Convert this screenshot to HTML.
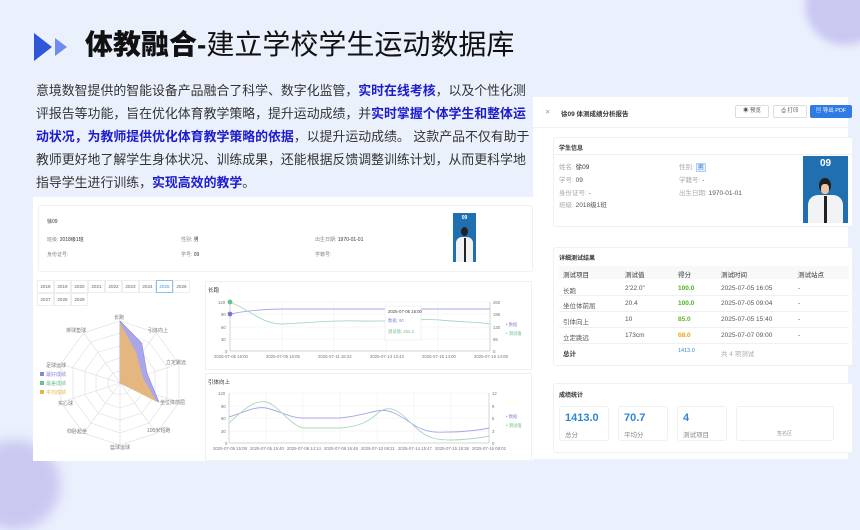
<!DOCTYPE html>
<html><head><meta charset="utf-8"><style>
*{margin:0;padding:0;box-sizing:border-box}
body{width:860px;height:484px;overflow:hidden;background:#ebf0fd;font-family:"Liberation Sans","Noto Sans CJK SC",sans-serif;position:relative;color:#222}
.abs{position:absolute}
.blob1{left:805px;top:-35px;width:80px;height:80px;border-radius:50%;background:#c9c8f1;filter:blur(4px)}
.blob2{left:-30px;top:440px;width:90px;height:90px;border-radius:50%;background:#c9c8f1;filter:blur(6px)}
.title{left:85px;top:26px;font-size:28px;line-height:38px;white-space:nowrap;color:#111}
.title b{font-weight:900}
.para{left:36px;top:79px;width:520px;font-size:12.9px;line-height:23px;color:#333;white-space:nowrap}
.para b{color:#1c1ccc}
.lp{left:33px;top:197px;width:500px;height:264px;background:#fff}
.card{position:absolute;background:#fff;border:1px solid #eef0f4;border-radius:3px}
.s{font-size:5px;color:#888;position:absolute;white-space:nowrap}
.rp{left:533px;top:97px;width:315px;height:362px;background:#fff}
.t7{font-size:6.5px;position:absolute;white-space:nowrap;color:#555}
.btn{position:absolute;top:8px;height:13px;border:1px solid #ddd;border-radius:2px;font-size:5.5px;line-height:11px;text-align:center;color:#555}
</style></head><body>
<div class="abs blob1"></div><div class="abs blob2"></div>
<svg class="abs" style="left:34px;top:33px" width="40" height="30"><polygon points="0,0 18,14 0,28" fill="#2e56d8"/><polygon points="21,5 33,14 21,23" fill="#6f8cf0"/></svg>
<div class="abs title"><b>体教融合-</b>建立学校学生运动数据库</div>
<div class="abs para">意境数智提供的智能设备产品融合了科学、数字化监管，<b>实时在线考核</b>，以及个性化测<br>评报告等功能，旨在优化体育教学策略，提升运动成绩，并<b>实时掌握个体学生和整体运</b><br><b>动状况，为教师提供优化体育教学策略的依据</b>，以提升运动成绩。 这款产品不仅有助于<br>教师更好地了解学生身体状况、训练成果，还能根据反馈调整训练计划，从而更科学地<br>指导学生进行训练，<b>实现高效的教学</b>。</div>

<div class="abs lp">
 <div class="card" style="left:5px;top:8px;width:495px;height:67px">
  <div class="s" style="left:8px;top:12px;color:#333">徐09</div>
  <div class="s" style="left:8px;top:30px">班级: <span style="color:#333">2018级1班</span></div>
  <div class="s" style="left:142px;top:30px">性别: <span style="color:#333">男</span></div>
  <div class="s" style="left:276px;top:30px">出生日期: <span style="color:#333">1970-01-01</span></div>
  <div class="s" style="left:8px;top:45px">身份证号:</div>
  <div class="s" style="left:142px;top:45px">学号: <span style="color:#333">09</span></div>
  <div class="s" style="left:276px;top:45px">学籍号:</div>
  <div style="position:absolute;left:414px;top:7px;width:23px;height:49px;background:#1f6fb1">
   <div style="color:#fff;font-size:5px;font-weight:bold;text-align:center;margin-top:2px">09</div>
   <div style="position:absolute;left:8px;top:14px;width:7px;height:9px;border-radius:50%;background:#222"></div>
   <div style="position:absolute;left:3px;top:24px;width:17px;height:25px;border-radius:6px 6px 0 0;background:#f2f2f4"></div>
   <div style="position:absolute;left:11px;top:25px;width:1.5px;height:24px;background:#222"></div>
  </div>
 </div>
 <div style="position:absolute;left:4px;top:83px;width:153px;height:27px;font-size:4.6px;color:#666">
  <div style="display:flex">
   <div style="width:17px;height:13px;border:1px solid #eee;text-align:center;line-height:11px">2018</div><div style="width:17px;height:13px;border:1px solid #eee;text-align:center;line-height:11px">2019</div><div style="width:17px;height:13px;border:1px solid #eee;text-align:center;line-height:11px">2020</div><div style="width:17px;height:13px;border:1px solid #eee;text-align:center;line-height:11px">2021</div><div style="width:17px;height:13px;border:1px solid #eee;text-align:center;line-height:11px">2022</div><div style="width:17px;height:13px;border:1px solid #eee;text-align:center;line-height:11px">2023</div><div style="width:17px;height:13px;border:1px solid #eee;text-align:center;line-height:11px">2024</div><div style="width:17px;height:13px;border:1px solid #8cc0e8;color:#4a9bd6;text-align:center;line-height:11px">2025</div><div style="width:17px;height:13px;border:1px solid #eee;text-align:center;line-height:11px">2026</div>
  </div>
  <div style="display:flex">
   <div style="width:17px;height:13px;border:1px solid #eee;text-align:center;line-height:11px">2027</div><div style="width:17px;height:13px;border:1px solid #eee;text-align:center;line-height:11px">2028</div><div style="width:17px;height:13px;border:1px solid #eee;text-align:center;line-height:11px">2029</div>
  </div>
 </div>
</div>
<svg class="abs" style="left:33px;top:310px" width="175" height="150" viewBox="33 310 175 150" font-size="5" fill="#777" font-family="Liberation Sans, Noto Sans CJK SC, sans-serif">
 <g fill="none" stroke="#ddd" stroke-width="0.6">
  <polygon points="120,321 156.4,332.8 179,363.8 179,402.2 156.4,433.2 120,445 83.6,433.2 61,402.2 61,363.8 83.6,332.8"/>
  <polygon points="120,333 149,342 167,367 167,398 149,423 120,433 91,423 73,398 73,367 91,342"/>
  <polygon points="120,346 142,352 155,371 155,395 142,413 120,420 98,413 85,395 85,371 98,352"/>
  <polygon points="120,358 135,363 144,375 144,391 135,403 120,408 105,403 96,391 96,375 105,363"/>
  <polygon points="120,371 127,373 132,379 132,387 127,393 120,395 113,393 108,387 108,379 113,373"/>
  <path d="M120,383L120,321M120,383L156.4,332.8M120,383L179,363.8M120,383L179,402.2M120,383L156.4,433.2M120,383L120,445M120,383L83.6,433.2M120,383L61,402.2M120,383L61,363.8M120,383L83.6,332.8"/>
 </g>
 <polygon points="120,383 120,321 141.7,343 147,373 159,402" fill="#a9a6ea" stroke="#8f8be0" stroke-width="0.6"/>
 <polygon points="120,383 120,323 136,352 143,378 157,402" fill="#e3b77f"/>
 <text x="114" y="319">长跑</text><text x="148" y="332">引体向上</text><text x="166" y="364">立定跳远</text><text x="160" y="404">坐位体前屈</text><text x="147" y="432">100米短跑</text><text x="110" y="449">篮球运球</text><text x="67" y="433">仰卧起坐</text><text x="58" y="405">实心球</text><text x="46" y="367">足球运球</text><text x="66" y="332">排球垫球</text>
 <rect x="40" y="372" width="4" height="4" fill="#8a86d8"/><text x="46" y="376" fill="#8a86d8">最好成绩</text>
 <rect x="40" y="381" width="4" height="4" fill="#6cc08e"/><text x="46" y="385" fill="#6cc08e">最差成绩</text>
 <rect x="40" y="390" width="4" height="4" fill="#e8b24c"/><text x="46" y="394" fill="#e8b24c">平均成绩</text>
</svg>
<svg class="abs" style="left:205px;top:280px" width="328" height="181" viewBox="205 280 328 181" font-size="4.3" fill="#777" font-family="Liberation Sans, Noto Sans CJK SC, sans-serif">
 <rect x="205.5" y="281.5" width="326" height="88" fill="#fff" stroke="#f0f0f3"/>
 <rect x="205.5" y="373.5" width="326" height="87" fill="#fff" stroke="#f0f0f3"/>
 <text x="208" y="292" fill="#333" font-size="5.5">长跑</text>
 <g stroke="#eee" stroke-width="0.5"><path d="M230,302H490M230,314H490M230,327H490M230,339H490M282,302V351M334,302V351M386,302V351M438,302V351"/></g>
 <path d="M230,351H490M230,302V351M490,302V351" stroke="#aaa" stroke-width="0.5"/>
 <text x="218" y="304">120</text><text x="221" y="316">90</text><text x="221" y="329">60</text><text x="221" y="341">30</text><text x="225" y="353">0</text>
 <text x="493" y="304">260</text><text x="493" y="316">195</text><text x="493" y="329">130</text><text x="493" y="341">65</text><text x="493" y="353">0</text>
 <text x="214" y="358">2025-07-05 16:00</text><text x="266" y="358">2025-07-05 16:05</text><text x="318" y="358">2025-07-11 16:22</text><text x="370" y="358">2025-07-13 13:43</text><text x="422" y="358">2025-07-15 14:00</text><text x="474" y="358">2025-07-15 14:08</text>
 <path d="M230,314C250,310 270,309 282,309H490" fill="none" stroke="#a8a6e6" stroke-width="0.9"/>
 <path d="M230,302C250,310 262,324 282,324C310,323 330,320 360,321S420,318 440,320S480,322 490,324" fill="none" stroke="#a6d9bd" stroke-width="0.9"/>
 <circle cx="230" cy="314" r="2.4" fill="#7b74d8"/><circle cx="230" cy="302" r="2.4" fill="#6cc08e"/>
 <rect x="385" y="306" width="36" height="34" fill="#fff" stroke="#e6e6e6" stroke-width="0.5"/>
 <text x="388" y="313" fill="#444">2025-07-05 16:00</text><text x="388" y="322" fill="#8a86d8">数据: 90</text><text x="388" y="333" fill="#6cc08e">测试值: 253.2</text>
 <text x="506" y="326" fill="#8a86d8">• 数据</text><text x="506" y="335" fill="#6cc08e">• 测试值</text>
 <text x="208" y="384" fill="#333" font-size="5.5">引体向上</text>
 <g stroke="#eee" stroke-width="0.5"><path d="M229,393H489M229,406H489M229,418H489M229,431H489M266,393V443M303,393V443M340,393V443M377,393V443M414,393V443M451,393V443"/></g>
 <path d="M229,443H489M229,393V443M489,393V443" stroke="#aaa" stroke-width="0.5"/>
 <text x="218" y="395">120</text><text x="221" y="408">90</text><text x="221" y="420">60</text><text x="221" y="433">30</text><text x="225" y="445">0</text>
 <text x="492" y="395">12</text><text x="492" y="408">9</text><text x="492" y="420">6</text><text x="492" y="433">3</text><text x="492" y="445">0</text>
 <text x="213" y="450">2025-07-05 15:08</text><text x="250" y="450">2025-07-05 15:40</text><text x="287" y="450">2025-07-08 14:14</text><text x="324" y="450">2025-07-09 16:48</text><text x="361" y="450">2025-07-10 09:21</text><text x="398" y="450">2025-07-14 15:47</text><text x="435" y="450">2025-07-15 15:38</text><text x="472" y="450">2025-07-16 09:02</text>
 <path d="M229,417C245,412 255,406 266,408S290,418 303,418H340C360,416 370,412 377,411C390,408 400,416 414,425S440,432 451,432S480,430 489,428" fill="none" stroke="#a8a6e6" stroke-width="0.9"/>
 <path d="M229,423C245,408 255,400 266,402S290,425 303,428H340C360,427 370,420 377,414C390,402 400,412 414,426S440,440 451,440S480,438 489,436" fill="none" stroke="#a6d9bd" stroke-width="0.9"/>
 <text x="506" y="418" fill="#8a86d8">• 数据</text><text x="506" y="427" fill="#6cc08e">• 测试值</text>
</svg>

<div class="abs rp">
 <div class="t7" style="left:12px;top:11px;color:#999">✕</div>
 <div class="t7" style="left:28px;top:11px;color:#333;font-weight:bold">徐09 体测成绩分析报告</div>
 <div class="btn" style="left:202px;width:34px">◉ 预览</div>
 <div class="btn" style="left:240px;width:34px">⎙ 打印</div>
 <div class="btn" style="left:277px;width:42px;background:#2f7ae5;border-color:#2f7ae5;color:#fff">▤ 导出 PDF</div>
 <div style="position:absolute;left:0;top:30px;width:315px;border-top:1px solid #f0f0f0"></div>
 <div class="card" style="left:20px;top:40px;width:300px;height:90px">
  <div class="t7" style="left:5px;top:5px;color:#333;font-weight:bold;font-size:6px">学生信息</div>
  <div style="position:absolute;left:0;top:16px;width:100%;border-top:1px solid #f0f0f0"></div>
  <div class="t7" style="left:5px;top:23px;color:#aaa">姓名: <span style="color:#333">徐09</span></div>
  <div class="t7" style="left:125px;top:23px;color:#aaa">性别: <span style="color:#3a7bd5;background:#e4efff;border:1px solid #b6d0f5;padding:0 1px">男</span></div>
  <div class="t7" style="left:5px;top:36px;color:#aaa">学号: <span style="color:#555">09</span></div>
  <div class="t7" style="left:125px;top:36px;color:#aaa">学籍号: <span style="color:#555">-</span></div>
  <div class="t7" style="left:5px;top:49px;color:#aaa">身份证号: <span style="color:#555">-</span></div>
  <div class="t7" style="left:125px;top:49px;color:#aaa">出生日期: <span style="color:#555">1970-01-01</span></div>
  <div class="t7" style="left:5px;top:61px;color:#aaa">班级: <span style="color:#555">2018级1班</span></div>
 </div>
 <div style="position:absolute;left:270px;top:59px;width:45px;height:67px;background:#1f6fb1">
  <div style="color:#fff;font-size:10px;font-weight:bold;text-align:center;margin-top:2px">09</div>
  <div style="position:absolute;left:16px;top:22px;width:12px;height:15px;border-radius:50%;background:#1e1e1e"></div>
  <div style="position:absolute;left:18px;top:28px;width:8px;height:10px;border-radius:40%;background:#e9c4a6"></div>
  <div style="position:absolute;left:5px;top:39px;width:35px;height:28px;border-radius:10px 10px 0 0;background:#f3f3f5"></div>
  <div style="position:absolute;left:21px;top:40px;width:3px;height:27px;background:#222"></div>
 </div>
 <div class="card" style="left:20px;top:150px;width:300px;height:119px">
  <div class="t7" style="left:5px;top:5px;color:#333;font-weight:bold;font-size:6px">详细测试结果</div>
  <div style="position:absolute;left:5px;top:18px;width:290px;height:13px;background:#f7f8fa"></div>
  <div class="t7" style="left:9px;top:21px;color:#333">测试项目</div><div class="t7" style="left:71px;top:21px;color:#333">测试值</div><div class="t7" style="left:124px;top:21px;color:#333">得分</div><div class="t7" style="left:167px;top:21px;color:#333">测试时间</div><div class="t7" style="left:244px;top:21px;color:#333">测试站点</div>
  <div class="t7" style="left:9px;top:37px">长跑</div><div class="t7" style="left:71px;top:37px">2'22.0"</div><div class="t7" style="left:124px;top:37px;color:#4caf1e;font-weight:bold">100.0</div><div class="t7" style="left:167px;top:37px">2025-07-05 16:05</div><div class="t7" style="left:244px;top:37px">-</div>
  <div style="position:absolute;left:5px;top:47px;width:290px;border-top:1px solid #f0f0f0"></div>
  <div class="t7" style="left:9px;top:52px">坐位体前屈</div><div class="t7" style="left:71px;top:52px">20.4</div><div class="t7" style="left:124px;top:52px;color:#4caf1e;font-weight:bold">100.0</div><div class="t7" style="left:167px;top:52px">2025-07-05 09:04</div><div class="t7" style="left:244px;top:52px">-</div>
  <div style="position:absolute;left:5px;top:63px;width:290px;border-top:1px solid #f0f0f0"></div>
  <div class="t7" style="left:9px;top:68px">引体向上</div><div class="t7" style="left:71px;top:68px">10</div><div class="t7" style="left:124px;top:68px;color:#6ab42a;font-weight:bold">85.0</div><div class="t7" style="left:167px;top:68px">2025-07-05 15:40</div><div class="t7" style="left:244px;top:68px">-</div>
  <div style="position:absolute;left:5px;top:79px;width:290px;border-top:1px solid #f0f0f0"></div>
  <div class="t7" style="left:9px;top:84px">立定跳远</div><div class="t7" style="left:71px;top:84px">173cm</div><div class="t7" style="left:124px;top:84px;color:#e6a817;font-weight:bold">68.0</div><div class="t7" style="left:167px;top:84px">2025-07-07 09:00</div><div class="t7" style="left:244px;top:84px">-</div>
  <div style="position:absolute;left:5px;top:95px;width:290px;border-top:1px solid #f0f0f0"></div>
  <div class="t7" style="left:9px;top:100px;color:#333;font-weight:bold">总计</div><div class="t7" style="left:124px;top:100px;color:#3a8ad6;font-size:5.5px">1413.0</div><div class="t7" style="left:167px;top:100px;color:#aaa">共 4 项测试</div>
 </div>
 <div class="card" style="left:20px;top:286px;width:300px;height:70px">
  <div class="t7" style="left:5px;top:6px;color:#333;font-weight:bold;font-size:6px">成绩统计</div>
  <div class="card" style="left:5px;top:22px;width:50px;height:35px"><div style="position:absolute;left:5px;top:5px;font-size:11px;font-weight:bold;color:#2f86d6">1413.0</div><div class="t7" style="left:5px;top:22px;color:#888">总分</div></div>
  <div class="card" style="left:64px;top:22px;width:50px;height:35px"><div style="position:absolute;left:5px;top:5px;font-size:11px;font-weight:bold;color:#2f86d6">70.7</div><div class="t7" style="left:5px;top:22px;color:#888">平均分</div></div>
  <div class="card" style="left:123px;top:22px;width:50px;height:35px"><div style="position:absolute;left:5px;top:5px;font-size:11px;font-weight:bold;color:#2f86d6">4</div><div class="t7" style="left:5px;top:22px;color:#888">测试项目</div></div>
  <div class="card" style="left:182px;top:22px;width:98px;height:35px"><div class="t7" style="left:40px;top:23px;color:#999;font-size:5px">签名区</div></div>
 </div>
</div>
</body></html>
